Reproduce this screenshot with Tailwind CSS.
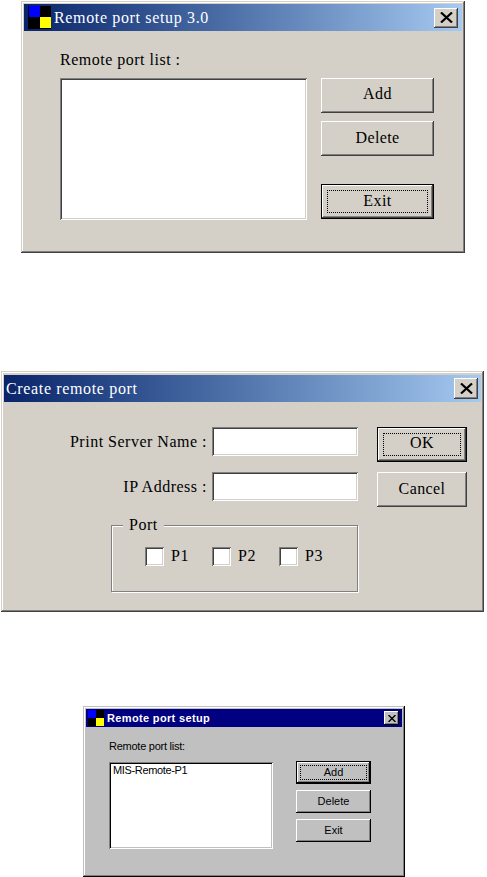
<!DOCTYPE html>
<html lang="en">
<head>
  <meta charset="UTF-8">
  <title>Remote port setup</title>
  <script src="https://cdn.jsdelivr.net/npm/@tailwindcss/browser@4"></script>
</head>
<body class="bg-white h-[877px] overflow-hidden font-['Liberation_Serif',serif] text-[16px] text-black">

  <!-- Remote port setup 3.0 -->
  <section class="ml-[21px] mt-[1px] w-[444px] h-[252px] p-[3px] bg-[#d4d0c8] shadow-[inset_-1px_-1px_0_#404040,inset_1px_1px_0_#d4d0c8,inset_-2px_-2px_0_#808080,inset_2px_2px_0_#fff]">
    <div class="h-[27px] pl-[4px] pr-[4px] flex items-center bg-gradient-to-r from-[#0a246a] to-[#a6caf0] text-white">
      <svg width="23" height="23" viewBox="0 0 23 23" class="shrink-0"><rect width="23" height="23" fill="#000"/><rect width="11" height="11" x="1" y="0" fill="#0000ff"/><rect width="11" height="11" x="12" y="11" fill="#ffff00"/></svg>
      <span class="ml-[3px] tracking-[0.65px]">Remote port setup 3.0</span>
      <button class="ml-auto w-[24px] h-[20px] flex items-center justify-center bg-[#d4d0c8] shadow-[inset_-1px_-1px_0_#404040,inset_1px_1px_0_#fff,inset_-2px_-2px_0_#808080]">
        <svg width="13" height="11" viewBox="0 0 13 11"><path d="M1 0.5 12 10.5M12 0.5 1 10.5" stroke="#000" stroke-width="2.2" fill="none"/></svg>
      </button>
    </div>
    <div class="flex pl-[36px]">
      <div class="w-[247px]">
        <p class="h-[20px] mt-[19px] leading-[20px] tracking-[0.5px]">Remote port list :</p>
        <div class="h-[142px] mt-[8px] bg-white shadow-[inset_1px_1px_0_#808080,inset_-1px_-1px_0_#fff,inset_2px_2px_0_#404040,inset_-2px_-2px_0_#d4d0c8]"></div>
      </div>
      <div class="ml-[14px] w-[113px] mt-[47px] flex flex-col gap-[8px]">
        <button class="h-[35px] pb-[3px] tracking-[0.4px] bg-[#d4d0c8] shadow-[inset_-1px_-1px_0_#404040,inset_1px_1px_0_#fff,inset_-2px_-2px_0_#808080]">Add</button>
        <button class="h-[35px] pb-[1px] tracking-[0.4px] bg-[#d4d0c8] shadow-[inset_-1px_-1px_0_#404040,inset_1px_1px_0_#fff,inset_-2px_-2px_0_#808080]">Delete</button>
        <button class="h-[35px] mt-[20px] p-[5px] border border-black bg-[#d4d0c8] shadow-[inset_-1px_-1px_0_#404040,inset_1px_1px_0_#fff,inset_-2px_-2px_0_#808080]">
          <span class="flex items-center justify-center h-full pb-[2px] tracking-[0.4px] border border-dotted border-black">Exit</span>
        </button>
      </div>
    </div>
  </section>

  <!-- Create remote port -->
  <section class="ml-[1px] mt-[118px] w-[483px] h-[241px] p-[3px] bg-[#d4d0c8] shadow-[inset_-1px_-1px_0_#404040,inset_1px_1px_0_#d4d0c8,inset_-2px_-2px_0_#808080,inset_2px_2px_0_#fff]">
    <div class="h-[27px] mt-[1px] pl-[2px] pr-[3px] flex items-center bg-gradient-to-r from-[#0a246a] to-[#a6caf0] text-white">
      <span class="tracking-[0.65px]">Create remote port</span>
      <button class="ml-auto w-[24px] h-[21px] flex items-center justify-center bg-[#d4d0c8] shadow-[inset_-1px_-1px_0_#404040,inset_1px_1px_0_#fff,inset_-2px_-2px_0_#808080]">
        <svg width="13" height="11" viewBox="0 0 13 11"><path d="M1 0.5 12 10.5M12 0.5 1 10.5" stroke="#000" stroke-width="2.2" fill="none"/></svg>
      </button>
    </div>
    <div class="flex">
      <div class="w-[354px] mt-[25px]">
        <div class="flex items-center justify-end h-[29px] gap-[5px]">
          <span class="tracking-[0.5px] whitespace-nowrap">Print Server Name :</span>
          <div class="w-[146px] h-full bg-white shadow-[inset_1px_1px_0_#808080,inset_-1px_-1px_0_#fff,inset_2px_2px_0_#404040,inset_-2px_-2px_0_#d4d0c8]"></div>
        </div>
        <div class="flex items-center justify-end h-[29px] mt-[16px] gap-[5px]">
          <span class="tracking-[0.5px] whitespace-nowrap">IP Address :</span>
          <div class="w-[146px] h-full bg-white shadow-[inset_1px_1px_0_#808080,inset_-1px_-1px_0_#fff,inset_2px_2px_0_#404040,inset_-2px_-2px_0_#d4d0c8]"></div>
        </div>
        <div class="relative ml-[107px] w-[247px] h-[67px] mt-[24px] pl-[33px] pt-[21px] flex border border-[#808080] shadow-[1px_1px_0_#fff,inset_1px_1px_0_#fff]">
          <span class="absolute left-[11px] top-[-11px] px-[6px] bg-[#d4d0c8] leading-[20px] tracking-[0.5px]">Port</span>
          <label class="flex items-center h-[19px] w-[67px]">
            <span class="w-[19px] h-[19px] bg-white shadow-[inset_1px_1px_0_#808080,inset_-1px_-1px_0_#fff,inset_2px_2px_0_#404040,inset_-2px_-2px_0_#d4d0c8]"></span>
            <span class="ml-[7px] tracking-[0.5px] mb-[2px]">P1</span>
          </label>
          <label class="flex items-center h-[19px] w-[67px]">
            <span class="w-[19px] h-[19px] bg-white shadow-[inset_1px_1px_0_#808080,inset_-1px_-1px_0_#fff,inset_2px_2px_0_#404040,inset_-2px_-2px_0_#d4d0c8]"></span>
            <span class="ml-[7px] tracking-[0.5px] mb-[2px]">P2</span>
          </label>
          <label class="flex items-center h-[19px] w-[67px]">
            <span class="w-[19px] h-[19px] bg-white shadow-[inset_1px_1px_0_#808080,inset_-1px_-1px_0_#fff,inset_2px_2px_0_#404040,inset_-2px_-2px_0_#d4d0c8]"></span>
            <span class="ml-[7px] tracking-[0.5px] mb-[2px]">P3</span>
          </label>
        </div>
      </div>
      <div class="ml-[19px] w-[90px] mt-[25px] flex flex-col gap-[10px]">
        <button class="h-[35px] p-[5px] border border-black bg-[#d4d0c8] shadow-[inset_-1px_-1px_0_#404040,inset_1px_1px_0_#fff,inset_-2px_-2px_0_#808080]">
          <span class="flex items-center justify-center h-full pb-[3px] tracking-[0.4px] border border-dotted border-black">OK</span>
        </button>
        <button class="h-[35px] pb-[2px] tracking-[0.4px] bg-[#d4d0c8] shadow-[inset_-1px_-1px_0_#404040,inset_1px_1px_0_#fff,inset_-2px_-2px_0_#808080]">Cancel</button>
      </div>
    </div>
  </section>

  <!-- Remote port setup, classic version -->
  <section class="ml-[83px] mt-[94px] w-[322px] h-[171px] p-[3px] bg-[#c0c0c0] font-['Liberation_Sans',sans-serif] text-[11px] text-black shadow-[inset_-1px_-1px_0_#000,inset_1px_1px_0_#c0c0c0,inset_-2px_-2px_0_#808080,inset_2px_2px_0_#fff]">
    <div class="h-[18px] pl-[2px] pr-[3px] flex items-center bg-[#000080] text-white">
      <svg width="16" height="16" viewBox="0 0 16 16" class="shrink-0"><rect width="16" height="16" fill="#000"/><rect width="8" height="8" fill="#0000ff"/><rect width="8" height="8" x="8" y="8" fill="#ffff00"/></svg>
      <span class="ml-[3px] font-bold text-[11px] tracking-[0.35px]">Remote port setup</span>
      <button class="ml-auto w-[15px] h-[14px] flex items-center justify-center bg-[#c0c0c0] shadow-[inset_-1px_-1px_0_#000,inset_1px_1px_0_#fff,inset_-2px_-2px_0_#808080]">
        <svg width="8" height="7" viewBox="0 0 8 7"><path d="M0.5 0 7.5 7M7.5 0 0.5 7" stroke="#000" stroke-width="1.4" fill="none"/></svg>
      </button>
    </div>
    <div class="flex pl-[23px]">
      <div class="w-[164px]">
        <p class="h-[14px] mt-[12px] leading-[14px] tracking-[-0.25px]">Remote port list:</p>
        <div class="h-[87px] mt-[9px] pl-[4px] pt-[1px] leading-[14px] tracking-[-0.35px] bg-white shadow-[inset_1px_1px_0_#808080,inset_-1px_-1px_0_#fff,inset_2px_2px_0_#000,inset_-2px_-2px_0_#c0c0c0]">MIS-Remote-P1</div>
      </div>
      <div class="ml-[23px] w-[75px] mt-[34px] flex flex-col gap-[6px]">
        <button class="h-[23px] p-[3px] border border-black bg-[#c0c0c0] shadow-[inset_-1px_-1px_0_#000,inset_1px_1px_0_#fff,inset_-2px_-2px_0_#808080]">
          <span class="flex items-center justify-center h-full border border-dotted border-black">Add</span>
        </button>
        <button class="h-[23px] bg-[#c0c0c0] shadow-[inset_-1px_-1px_0_#000,inset_1px_1px_0_#fff,inset_-2px_-2px_0_#808080]">Delete</button>
        <button class="h-[23px] bg-[#c0c0c0] shadow-[inset_-1px_-1px_0_#000,inset_1px_1px_0_#fff,inset_-2px_-2px_0_#808080]">Exit</button>
      </div>
    </div>
  </section>

</body>
</html>
